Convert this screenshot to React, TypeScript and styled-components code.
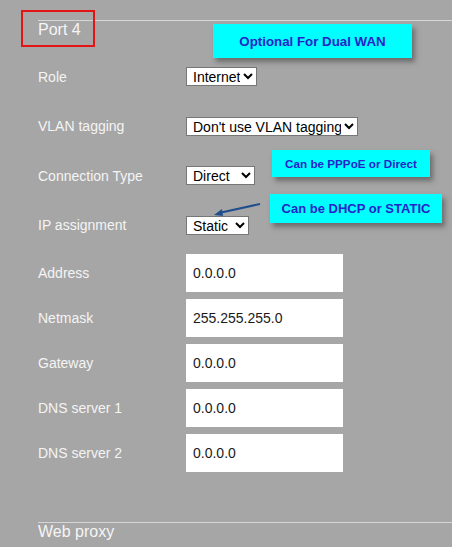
import styled, { createGlobalStyle } from 'styled-components';

const GlobalStyle = createGlobalStyle`
  body {
    margin: 0;
    background: #a6a6a6;
    font-family: "Liberation Sans", Arial, sans-serif;
  }
`;

const Page = styled.div`
  position: relative;
  box-sizing: border-box;
  min-height: 547px;
  padding: 20px 0 0 38px;
  overflow: hidden;
`;

const SectionTitle = styled.div<{ $gap?: number }>`
  border-top: 1px solid #d6d6d6;
  margin-top: ${(p) => p.$gap || 0}px;
  color: #f5f5f5;
  font-size: 16px;
  line-height: 18px;
`;

const Form = styled.div`
  margin-top: 13px;
  display: flex;
  flex-direction: column;
`;

const Row = styled.div<{ $h: number }>`
  display: grid;
  grid-template-columns: 148px 1fr;
  align-items: center;
  height: ${(p) => p.$h}px;
`;

const Label = styled.span`
  color: #f4f4f4;
  font-size: 14px;
`;

const Select = styled.select<{ $w: number }>`
  box-sizing: border-box;
  width: ${(p) => p.$w}px;
  height: 19px;
  padding: 0 0 0 2px;
  border: 1px solid #767676;
  border-radius: 0;
  background: #fff;
  color: #000;
  font-family: "Liberation Sans", Arial, sans-serif;
  font-size: 14px;
`;

const TextInput = styled.input`
  box-sizing: border-box;
  width: 157px;
  height: 38px;
  padding: 0 7px;
  border: none;
  outline: none;
  background: #fff;
  color: #1a1a1a;
  font-family: "Liberation Sans", Arial, sans-serif;
  font-size: 14px;
`;

const Callout = styled.div<{ $x: number; $y: number; $w: number; $h: number; $size: number }>`
  position: absolute;
  left: ${(p) => p.$x}px;
  top: ${(p) => p.$y}px;
  width: ${(p) => p.$w}px;
  height: ${(p) => p.$h}px;
  display: flex;
  align-items: center;
  justify-content: center;
  background: #00ffff;
  box-shadow: 3px 4px 5px rgba(60, 60, 60, 0.55);
  color: #2424c8;
  font-weight: bold;
  font-size: ${(p) => p.$size}px;
`;

const Highlight = styled.div`
  position: absolute;
  left: 21px;
  top: 10px;
  width: 74px;
  height: 37px;
  box-sizing: border-box;
  border: 2px solid #e41414;
`;

const Arrow = styled.svg`
  position: absolute;
  left: 205px;
  top: 195px;
`;

const selectRows = [
  { label: 'Role', value: 'Internet', options: ['Internet', 'LAN'], w: 71 },
  { label: 'VLAN tagging', value: "Don't use VLAN tagging", options: ["Don't use VLAN tagging", 'Use VLAN tagging'], w: 172 },
  { label: 'Connection Type', value: 'Direct', options: ['Direct', 'PPPoE'], w: 69 },
  { label: 'IP assignment', value: 'Static', options: ['Static', 'DHCP'], w: 63 },
];

const inputRows = [
  { label: 'Address', value: '0.0.0.0' },
  { label: 'Netmask', value: '255.255.255.0' },
  { label: 'Gateway', value: '0.0.0.0' },
  { label: 'DNS server 1', value: '0.0.0.0' },
  { label: 'DNS server 2', value: '0.0.0.0' },
];

export default function App() {
  return (
    <>
      <GlobalStyle />
      <Page>
        <SectionTitle>Port 4</SectionTitle>
        <Form>
          {selectRows.map((r, i) => (
            <Row key={r.label} $h={i % 2 === 0 ? 49 : 50}>
              <Label>{r.label}</Label>
              <div>
                <Select $w={r.w} defaultValue={r.value}>
                  {r.options.map((o) => (
                    <option key={o}>{o}</option>
                  ))}
                </Select>
              </div>
            </Row>
          ))}
          {inputRows.map((r) => (
            <Row key={r.label} $h={45}>
              <Label>{r.label}</Label>
              <div>
                <TextInput type="text" defaultValue={r.value} />
              </div>
            </Row>
          ))}
        </Form>
        <SectionTitle $gap={47}>Web proxy</SectionTitle>

        <Highlight />
        <Callout $x={213} $y={24} $w={199} $h={34} $size={13.3}>
          Optional For Dual WAN
        </Callout>
        <Callout $x={272} $y={150} $w={158} $h={27} $size={11.7}>
          Can be PPPoE or Direct
        </Callout>
        <Callout $x={270} $y={194} $w={172} $h={29} $size={13}>
          Can be DHCP or STATIC
        </Callout>
        <Arrow width="60" height="25" viewBox="0 0 60 25">
          <line x1="55" y1="9" x2="14" y2="18" stroke="#1f4e8c" strokeWidth="2" />
          <polygon points="9,20 17,14 18,21" fill="#1f4e8c" />
        </Arrow>
      </Page>
    </>
  );
}
